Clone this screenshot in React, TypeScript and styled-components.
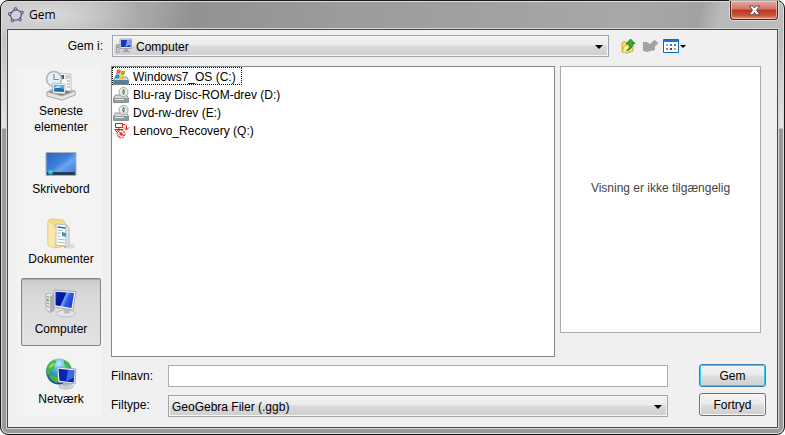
import React, { useState } from "react";
import styled, { createGlobalStyle, css } from "styled-components";

const GlobalStyle = createGlobalStyle`
  *, *::before, *::after { box-sizing: border-box; }
  body { margin: 0; background: #fff; }
  button, input, select { font: inherit; color: inherit; margin: 0; }
  svg { display: block; flex: none; }
`;

const DialogWindow = styled.div`
  display: flex;
  flex-direction: column;
  min-height: 100vh;
  padding: 0 6px 6px;
  border: 1px solid #19191b;
  border-radius: 8px;
  background:
    radial-gradient(ellipse 90px 30px at 50px 14px, rgba(235, 235, 235, 0.65), rgba(235, 235, 235, 0)) no-repeat,
    linear-gradient(180deg, transparent 40px, rgba(255, 255, 255, 0.6) 127px, #9b9a99 128px),
    linear-gradient(100deg, #c3c3c3 0, #b2b2b2 100px, #a5a5a5 150px, #929292 190px, #9b9b9b 330px, #a2a2a2 500px, #a8a8a8 620px, #a2a2a2 690px, #b9b9b9 710px, #c0c0c0 100%);
  box-shadow: inset 0 0 0 1px #dcdcdc;
  font: 12px/16px "Liberation Sans", Arial, sans-serif;
  color: #000;
`;

const TitleBar = styled.header`
  display: flex;
  align-items: flex-start;
  height: 28px;
  padding-left: 1px;
`;

const Title = styled.h1`
  flex: 1;
  margin: 0;
  padding: 6px 0 0 5px;
  font: 12px/16px "Open Sans", "Noto Sans", sans-serif;
`;

const TitleIcon = styled.span`
  padding-top: 6px;
`;

const CloseButton = styled.button`
  display: flex;
  justify-content: center;
  align-items: center;
  width: 48px;
  height: 19px;
  padding: 0;
  border: 1px solid #50211c;
  border-top: 0;
  border-radius: 0 0 4px 4px;
  background: linear-gradient(#e6a99d 0, #d27668 45%, #b93522 50%, #cc5238 80%, #ee9a78 100%);
  box-shadow: inset 0 0 0 1px rgba(255, 220, 210, 0.6), 0 0 0 1px rgba(235, 235, 235, 0.7);
`;

const Client = styled.main`
  flex: 1;
  display: flex;
  flex-direction: column;
  gap: 9px;
  padding: 5px 11px 10px 9px;
  border: 1px solid #4b4b4b;
  background: #f0f0f0;
  box-shadow: 0 0 0 1px #d2d2d2;
`;

const LookInRow = styled.div`
  display: flex;
  align-items: center;
`;

const LookInLabel = styled.label`
  width: 86px;
  text-align: right;
`;

const Combo = styled.div<{ $icon?: boolean }>`
  display: grid;
  flex: 1;
  align-items: center;
  height: 22px;
  min-width: 0;
  border: 1px solid #a1a4aa;
  background: linear-gradient(#f4f4f4 0, #eaeaea 45%, #dadada 50%, #cfcfcf 100%);
  box-shadow: inset 0 0 0 1px #f6f6f6;

  > * { grid-area: 1 / 1; pointer-events: none; }
  > select {
    width: 100%;
    height: 20px;
    padding: 2px 20px 0 ${(p) => (p.$icon ? 23 : 3)}px;
    border: 0;
    outline: 0;
    background: transparent;
    appearance: none;
    pointer-events: auto;
  }
`;

const ComboIcon = styled.span`
  justify-self: start;
  padding-left: 3px;
`;

const ComboArrow = styled.span`
  justify-self: end;
  padding: 2px 5px 0 0;
`;

const LookInCombo = styled(Combo)`
  margin-left: 9px;
`;

const Tools = styled.div`
  display: flex;
  align-items: center;
  gap: 5px;
  width: 157px;
  padding-left: 12px;
`;

const ToolButton = styled.button`
  display: flex;
  align-items: center;
  gap: 1px;
  padding: 0;
  border: 0;
  background: none;
`;

const Body = styled.div`
  flex: 1;
  display: flex;
  gap: 9px;
`;

const Places = styled.nav`
  display: flex;
  flex-direction: column;
  gap: 2px;
  width: 85px;
  padding: 2px 1px 0 4px;
  background: #f3f3f3;
`;

const Place = styled.button<{ $active: boolean }>`
  display: flex;
  flex-direction: column;
  align-items: center;
  justify-content: center;
  height: 68px;
  padding: 1px 0 0;
  border: 1px solid transparent;
  border-radius: 2px;
  background: none;

  > svg { margin-bottom: 1px; }

  ${(p) =>
    p.$active &&
    css`
      border-color: #868686;
      background: linear-gradient(#cdcdcd 0, #dbdbdb 30%, #e2e2e2 100%);
      box-shadow: inset 0 1px 1px #aaa;
    `}
`;

const Work = styled.div`
  flex: 1;
  display: flex;
  flex-direction: column;
  gap: 7px;
  min-width: 0;
`;

const Browse = styled.div`
  flex: 1;
  display: flex;
  align-items: stretch;
  gap: 5px;
  padding-right: 5px;
`;

const FileList = styled.ul`
  flex: 1;
  margin: 0;
  padding: 0;
  border: 1px solid #828790;
  background: #fff;
  list-style: none;
`;

const FileItem = styled.li<{ $focused: boolean }>`
  display: flex;
  align-items: center;
  gap: 3px;
  width: max-content;
  height: 18px;
  padding: 2px 5px 0 0;
  border: 1px dotted ${(p) => (p.$focused ? "#000" : "transparent")};
`;

const Preview = styled.section`
  display: flex;
  justify-content: center;
  width: 201px;
  margin-bottom: 24px;
  padding-top: 113px;
  border: 1px solid #a8abb0;
  background: #fff;
  color: #444;
`;

const Form = styled.form`
  display: grid;
  grid-template-columns: 57px 1fr 67px;
  grid-template-rows: 23px 24px;
  row-gap: 6px;
  align-items: start;
`;

const FieldLabel = styled.label`
  padding-top: 4px;
`;

const TextInput = styled.input`
  height: 22px;
  min-width: 0;
  padding: 0 3px;
  border: 1px solid #abadb3;
  outline: 0;
  background: #fff;
`;

const FieldCell = styled.div`
  display: grid;
  align-self: end;
  margin-right: 31px;
`;

const PushButton = styled.button<{ $primary?: boolean }>`
  height: 23px;
  padding: 0;
  border: 1px solid ${(p) => (p.$primary ? "#3580b4" : "#707070")};
  border-radius: 3px;
  background: linear-gradient(#f3f3f3 0, #ebebeb 48%, #dddddd 52%, #cfcfcf 100%);
  box-shadow: inset 0 0 0 1px ${(p) => (p.$primary ? "#35d0f8" : "#fafafa")};
`;

const LogoIcon = () => (
  <svg width="16" height="16" viewBox="0 0 16 16">
    <path d="M7.5 2L14 5.5L12 12.5L4.5 13.5L1.5 7z" fill="none" stroke="#555" strokeWidth="1.1" />
    {[[7.5, 2], [14, 5.5], [12, 12.5], [4.5, 13.5], [1.7, 7]].map(([x, y]) => (
      <circle key={x} cx={x} cy={y} r="1.5" fill="#9999ff" stroke="#333360" strokeWidth=".6" />
    ))}
  </svg>
);

const CloseIcon = () => (
  <svg width="13" height="11" viewBox="0 0 13 11">
    <path d="M1.5 1h3.5L6.5 3 8 1h3.5L8.5 5.3 11.8 9.7H8.2L6.5 7.5 4.8 9.7H1.2L4.5 5.3z" fill="#fff" stroke="#61413f" strokeWidth=".9" />
  </svg>
);

const Arrow = ({ size = 8 }: { size?: number }) => (
  <svg width={size} height={size / 2} viewBox="0 0 8 4">
    <path d="M0 0h8L4 4z" fill="#000" />
  </svg>
);

const ComputerIcon = () => (
  <svg width="32" height="32" viewBox="0 0 32 32">
    <defs>
      <linearGradient id="screen" x1="0" y1="0" x2="1" y2=".4">
        <stop offset="0" stopColor="#0a2fc0" />
        <stop offset=".35" stopColor="#0013a0" />
        <stop offset=".5" stopColor="#0019a5" />
        <stop offset=".56" stopColor="#7ba6fa" />
        <stop offset=".72" stopColor="#2f5fe2" />
        <stop offset="1" stopColor="#1b3fd0" />
      </linearGradient>
    </defs>
    <path d="M1 6l4-1 4 1.500v16l-4 2-4-3z" fill="#e4e7e9" stroke="#9aa1a5" strokeWidth=".7" />
    <path d="M5 8l4-1.500v16l-4 2z" fill="#a9b1b6" />
    <path d="M1.500 8.500l3 1M1.500 15l3 1M1.500 18l3 1" stroke="#7d868a" strokeWidth=".8" />
    <path d="M1.800 10.500l2 .7v2.500l-2-.7z" fill="#34c92f" />
    <ellipse cx="21" cy="25.500" rx="9" ry="3.500" fill="#e3e6e8" stroke="#a9aeb2" strokeWidth=".7" />
    <path d="M19 20h6v5.500h-6z" fill="#b8bfc4" />
    <path d="M9 2l22 1.500-3 18.500L9 19z" fill="#eceef0" stroke="#969da4" strokeWidth=".8" />
    <path d="M10.500 3.800l18.500 1.300L26.500 20 10.500 17.300z" fill="url(#screen)" />
  </svg>
);

const SmallComputerIcon = () => (
  <svg width="16" height="16" viewBox="0 0 16 16">
    <path d="M.5 6.500h2.500v8H.5z" fill="#cfd3d3" stroke="#858b8b" strokeWidth=".7" />
    <path d="M1.200 8h1v2h-1z" fill="#4bba35" />
    <path d="M4 1h11.500v9.500H4z" fill="#dedfe1" stroke="#92979c" strokeWidth=".8" />
    <path d="M5 2h9.500v7H5z" fill="#1736c8" />
    <path d="M11 2h3.500v4.500L9.500 9z" fill="#7ea2f1" />
    <path d="M8 11h4v2h2v1.300H6V13h2z" fill="#a0a5a8" />
  </svg>
);

const RecentIcon = () => (
  <svg width="32" height="32" viewBox="0 0 32 32">
    <path d="M2 22l9-5 19 4v4l-13 5L2 26z" fill="#c6caca" stroke="#8d9292" strokeWidth=".7" />
    <path d="M4 22l8-4 15 4-10 4z" fill="#777d7c" />
    <path d="M13 3l13 1v17l-13-1z" fill="#fafafa" stroke="#a6acb0" strokeWidth=".7" />
    <path d="M20 6h5M20 8h5M22 11h3M22 14h3M22 17h3" stroke="#91a0aa" strokeWidth=".9" />
    <path d="M15 5h4v4h-4z" fill="#4a596b" />
    <circle cx="9" cy="9" r="7.500" fill="#e5f0f4" stroke="#a9b8c0" strokeWidth="1.600" />
    <path d="M9 4v5.500h5" fill="none" stroke="#7b8f99" strokeWidth="1.200" />
    <path d="M7 13l13 1v10L8 23z" fill="#fff" stroke="#9eaab1" strokeWidth=".7" />
    <path d="M8.500 14.500l10.500.8v7L9 21.500z" fill="#4baee4" />
    <path d="M9 19q4-3 10 0v3l-10-.8z" fill="#26719b" />
    <path d="M9 17l5-1 3 1-5 1z" fill="#d5f5ff" />
    <path d="M2 22l15 4 13-5v4l-13 5L2 26z" fill="#e5e6e4" stroke="#9fa3a2" strokeWidth=".7" />
  </svg>
);

const DesktopIcon = () => (
  <svg width="32" height="32" viewBox="0 0 32 32">
    <defs>
      <linearGradient id="desk" x1="0" y1="0" x2="1" y2="1">
        <stop offset="0" stopColor="#2a62bd" />
        <stop offset=".45" stopColor="#3f80da" />
        <stop offset=".6" stopColor="#68a5ee" />
        <stop offset="1" stopColor="#2f6fd6" />
      </linearGradient>
    </defs>
    <path d="M1 4.500h30v23H1z" fill="url(#desk)" stroke="#a7b2bd" />
    <path d="M2 24h28v3H2z" fill="#263c52" />
    <circle cx="5.500" cy="24" r="2.700" fill="#39abc9" />
    <path d="M4.500 23h1v1h-1z" fill="#f2d65c" />
    <path d="M6 23h1v1H6z" fill="#9ae264" />
  </svg>
);

const DocumentsIcon = () => (
  <svg width="32" height="32" viewBox="0 0 32 32">
    <path d="M22 30l5-5 4 4-6 2z" fill="#dcdcdc" />
    <path d="M3 3l3-2 12 1 2 2v24l-10 2-7-3z" fill="#f5dd87" stroke="#d8ba68" strokeWidth=".7" />
    <path d="M11 6l11 1v21l-11-1z" fill="#fff" stroke="#9aa7b0" strokeWidth=".7" />
    <path d="M12.500 9l8 1" stroke="#2f6c83" strokeWidth="1.300" />
    <path d="M12.500 12l5 .5M12.500 15l3 .3M12.500 18l3 .3M12.500 21l8 1M12.500 24l8 1" stroke="#a5b6bc" />
    <path d="M17 14l4 1v4l-4-1z" fill="#3c9ac1" />
    <path d="M21 7l3 3v18l-5 2q3-3 2-8z" fill="#dfe9ee" stroke="#97a5ad" strokeWidth=".7" />
    <path d="M3 3l5 3 3 5-1 18-1 1-6-3z" fill="#f9e8ab" stroke="#dfc374" strokeWidth=".6" />
  </svg>
);

const NetworkIcon = () => (
  <svg width="32" height="32" viewBox="0 0 32 32">
    <defs>
      <radialGradient id="globe" cx=".5" cy=".2" r=".8">
        <stop offset="0" stopColor="#c1f3ff" />
        <stop offset=".4" stopColor="#3eadd9" />
        <stop offset="1" stopColor="#0a4d90" />
      </radialGradient>
    </defs>
    <circle cx="14" cy="13.500" r="13" fill="url(#globe)" />
    <path d="M1.500 12q1-7 8-10l2 2-3 3 1 3-4 2-1 5-3-1zM19 2l5 3 2 5-4-1-3-3zM6 17l5 1 2 4-1 3q-6-2-8-7z" fill="#4ab72d" />
    <path d="M5 7l5-3-2 4-4 3z" fill="#a1de52" />
    <ellipse cx="21" cy="28.500" rx="7" ry="2.500" fill="#d4d7d9" stroke="#a3a9ad" strokeWidth=".7" />
    <path d="M18 23h6v5.500h-6z" fill="#b4babe" />
    <path d="M12 9l19 2-1 15-17-2z" fill="#eceef0" stroke="#92999f" strokeWidth=".8" />
    <path d="M13.500 10.800l16 1.600-.8 12-14.200-1.600z" fill="#0924b5" />
    <path d="M23 11.800l6.500.6-.5 7-8 4z" fill="#5079e2" opacity=".8" />
  </svg>
);

const DriveBase = () => (
  <>
    <path d="M2.500 8h11l2 3v4.500H.5V11z" fill="#d6d8da" stroke="#777c82" strokeWidth=".8" />
    <path d="M1 11h14v4H1z" fill="#929a9f" />
    <path d="M2 12h9v1H2z" fill="#e9eceb" />
    <path d="M12.500 12h1.500v1.500h-1.500z" fill="#42d044" />
  </>
);

const WindowsDriveIcon = () => (
  <svg width="17" height="16" viewBox="0 0 17 16">
    <DriveBase />
    <path d="M1 11h14v4H1z" fill="#527f9c" />
    <path d="M4 1q2-1 4 .3L7 5Q5 4 3 5z" fill="#ef642c" />
    <path d="M8.500 1.500q2 1 4 0l-1 4q-2 1-4 0z" fill="#83bb38" />
    <path d="M2.700 5.700q2-1 4 0l-1 4q-2-1-4 0z" fill="#2989d5" />
    <path d="M7.300 6q2 1 4 0l-1 4q-2 1-4 0z" fill="#f6c62c" />
  </svg>
);

const DiscDriveIcon = () => (
  <svg width="17" height="16" viewBox="0 0 17 16">
    <DriveBase />
    <circle cx="10.500" cy="5" r="4.500" fill="#e9eeee" stroke="#8b9395" strokeWidth=".8" />
    <path d="M10.500 5V1a4 4 0 0 1 4 3z" fill="#cfe6cf" />
    <path d="M10.500 2.500v5" stroke="#555" strokeWidth="1.500" />
    <circle cx="10.500" cy="5" r="1" fill="#fff" stroke="#666" strokeWidth=".8" />
  </svg>
);

const RecoveryIcon = () => (
  <svg width="17" height="16" viewBox="0 0 17 16" fill="none" stroke="#f01010">
    <path d="M2.500.5h7v4h-7zM6 4.500v2M1.500 6.500h9M10 1.500h2l1.500 1.500v3.500M11 4.500l2.500 2.500L16 4.500" />
    <path d="M2 7l3 3M4 7l7 6" />
    <circle cx="8" cy="11" r="4" strokeDasharray="2 1" />
    <path d="M5 12l6-3M6 14l5-3" strokeDasharray="1 1" />
    <circle cx="8" cy="11" r="1" />
  </svg>
);

const UpIcon = () => (
  <svg width="16" height="16" viewBox="0 0 16 16">
    <path d="M1 4.500l3-1 2 1.500 6-1v9l-5 2-6-1z" fill="#f7db67" stroke="#c6a02d" strokeWidth=".8" />
    <path d="M3 8l10-1.500L11 13l-8 2-1.500-1z" fill="#ffef9a" stroke="#cfaa36" strokeWidth=".7" />
    <path d="M5.500 12.500q4-2 2.500-6.500H5L9.500 1 14 5.500h-2.500q.5 6-6 7z" fill="#39a832" stroke="#187b20" strokeWidth=".8" />
  </svg>
);

const NewFolderIcon = () => (
  <svg width="16" height="16" viewBox="0 0 16 16">
    <path d="M1 4h4l2 1.500h2L11 3l2-1 1 1.500 2 .5-1 3-2 1v4l-8 2-4-1z" fill="#a2a2a2" />
  </svg>
);

const ViewIcon = () => (
  <svg width="16" height="14" viewBox="0 0 16 14">
    <path d="M.5.5h15v13H.5z" fill="#fff" stroke="#0869cd" />
    <path d="M1 1h14v2H1z" fill="#1677dc" />
    <path d="M3 5h2v2H3z" fill="#a8a8b8" />
    <path d="M7 5h2v2H7z" fill="#207cdc" />
    <path d="M11 5h2v2h-2z" fill="#35a047" />
    <path d="M3 9h2v2H3z" fill="#e36a4b" />
    <path d="M7 9h2v2H7z" fill="#234398" />
    <path d="M11 9h2v2h-2z" fill="#d4a52e" />
  </svg>
);

const places = [
  { lines: ["Seneste", "elementer"], icon: <RecentIcon /> },
  { lines: ["Skrivebord"], icon: <DesktopIcon /> },
  { lines: ["Dokumenter"], icon: <DocumentsIcon /> },
  { lines: ["Computer"], icon: <ComputerIcon /> },
  { lines: ["Netværk"], icon: <NetworkIcon /> },
];

const drives = [
  { name: "Windows7_OS (C:)", icon: <WindowsDriveIcon /> },
  { name: "Blu-ray Disc-ROM-drev (D:)", icon: <DiscDriveIcon /> },
  { name: "Dvd-rw-drev (E:)", icon: <DiscDriveIcon /> },
  { name: "Lenovo_Recovery (Q:)", icon: <RecoveryIcon /> },
];

export default function App() {
  const [place, setPlace] = useState(3);
  const [drive, setDrive] = useState(0);
  return (
    <>
      <GlobalStyle />
      <DialogWindow role="dialog" aria-labelledby="title">
        <TitleBar>
          <TitleIcon><LogoIcon /></TitleIcon>
          <Title id="title">Gem</Title>
          <CloseButton type="button" aria-label="Luk"><CloseIcon /></CloseButton>
        </TitleBar>
        <Client>
          <LookInRow>
            <LookInLabel htmlFor="folder">Gem i:</LookInLabel>
            <LookInCombo $icon>
              <select id="folder"><option>Computer</option></select>
              <ComboIcon><SmallComputerIcon /></ComboIcon>
              <ComboArrow><Arrow /></ComboArrow>
            </LookInCombo>
            <Tools>
              <ToolButton type="button" aria-label="Et niveau op"><UpIcon /></ToolButton>
              <ToolButton type="button" aria-label="Ny mappe"><NewFolderIcon /></ToolButton>
              <ToolButton type="button" aria-label="Vis"><ViewIcon /><Arrow size={6} /></ToolButton>
            </Tools>
          </LookInRow>
          <Body>
            <Places>
              {places.map((p, i) => (
                <Place key={p.lines[0]} type="button" $active={i === place} onClick={() => setPlace(i)}>
                  {p.icon}
                  {p.lines.map((line) => <span key={line}>{line}</span>)}
                </Place>
              ))}
            </Places>
            <Work>
              <Browse>
                <FileList role="listbox" aria-label="Drev">
                  {drives.map((d, i) => (
                    <FileItem key={d.name} role="option" aria-selected={i === drive} $focused={i === drive} onClick={() => setDrive(i)}>
                      {d.icon}
                      {d.name}
                    </FileItem>
                  ))}
                </FileList>
                <Preview>Visning er ikke tilgængelig</Preview>
              </Browse>
              <Form onSubmit={(e) => e.preventDefault()}>
                <FieldLabel htmlFor="name">Filnavn:</FieldLabel>
                <FieldCell><TextInput id="name" type="text" /></FieldCell>
                <PushButton type="submit" $primary>Gem</PushButton>
                <FieldLabel htmlFor="type">Filtype:</FieldLabel>
                <FieldCell>
                  <Combo>
                    <select id="type"><option>GeoGebra Filer (.ggb)</option></select>
                    <ComboArrow><Arrow /></ComboArrow>
                  </Combo>
                </FieldCell>
                <PushButton type="button">Fortryd</PushButton>
              </Form>
            </Work>
          </Body>
        </Client>
      </DialogWindow>
    </>
  );
}
